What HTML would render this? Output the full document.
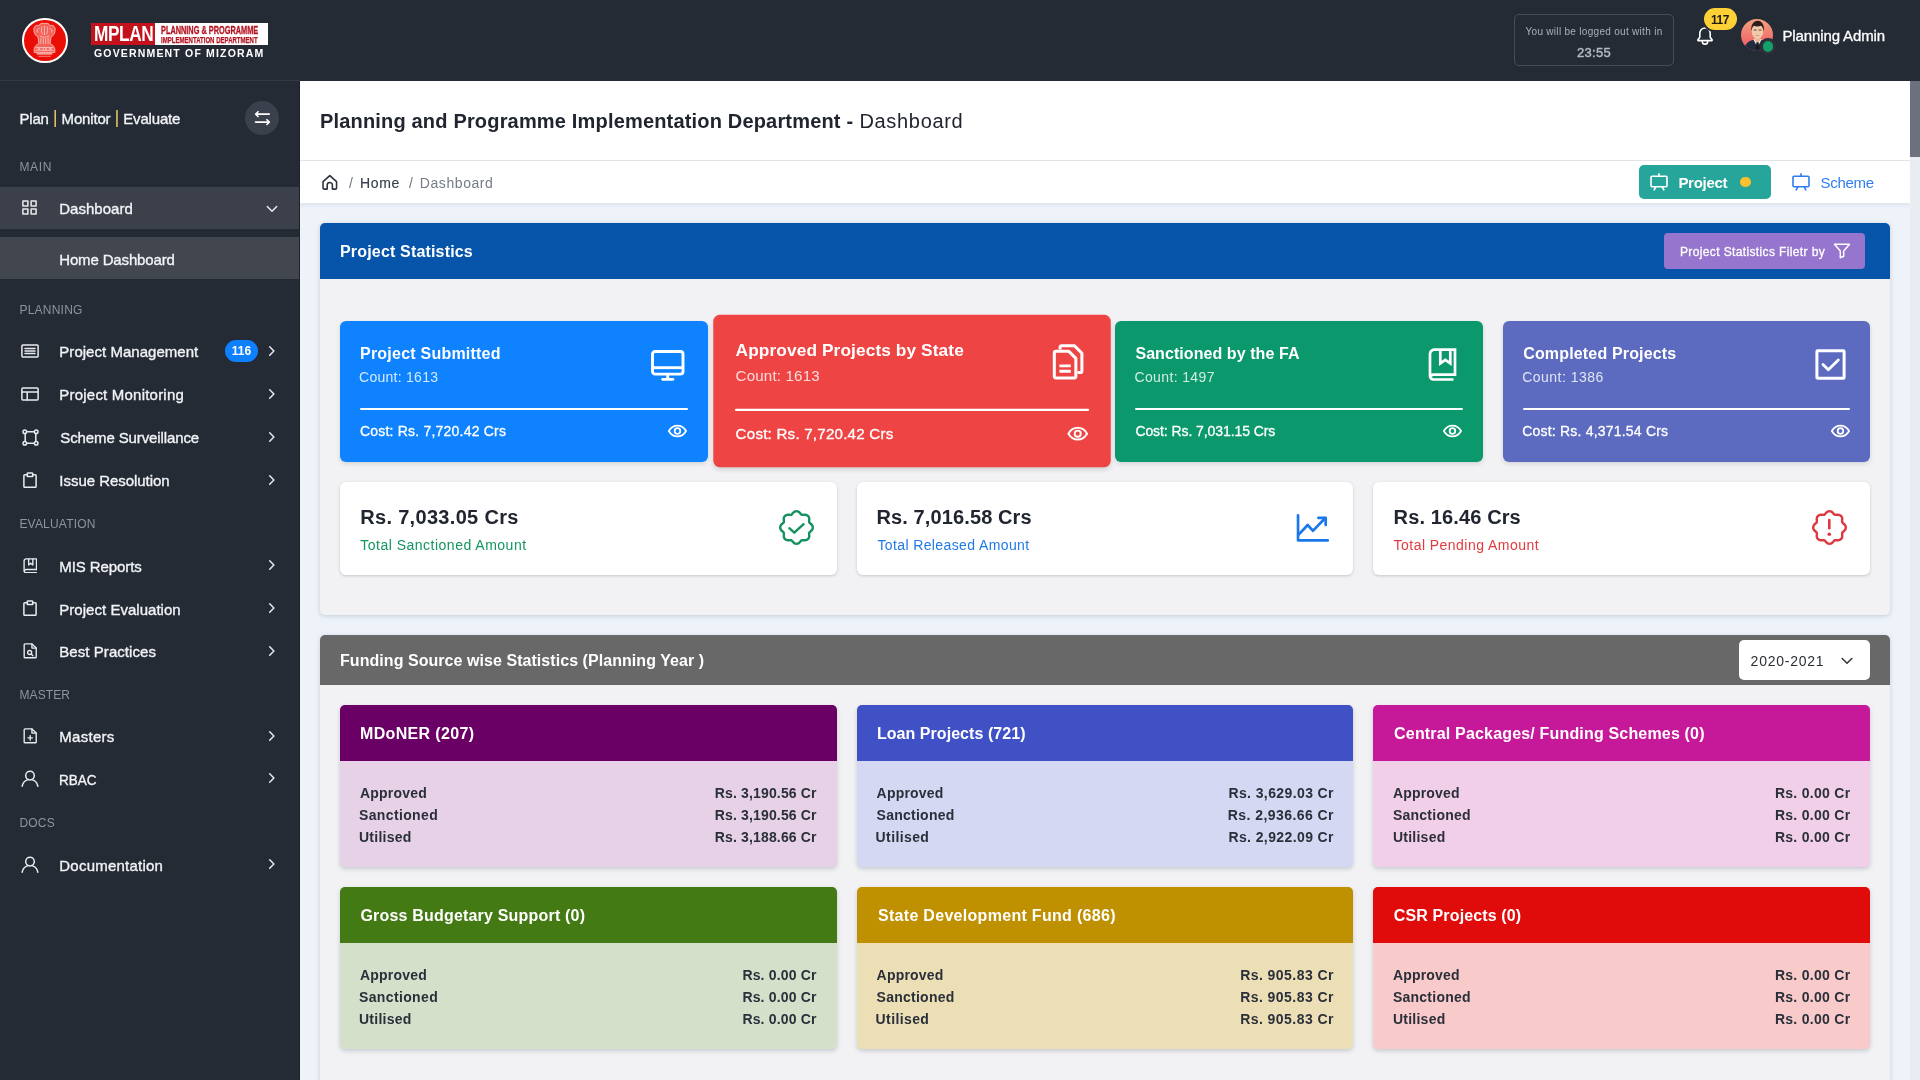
<!DOCTYPE html>
<html lang="en">
<head>
<meta charset="utf-8">
<title>MPLAN - Dashboard</title>
<style>
*{box-sizing:border-box;margin:0;padding:0}
html,body{width:1920px;height:1080px;overflow:hidden}
body{font-family:"Liberation Sans",sans-serif;background:#eef3fa;color:#1f2733;position:relative}
.abs{position:absolute}
.t{position:absolute;white-space:nowrap;line-height:1}
svg{display:block}
/* top header */
#top{position:absolute;left:0;top:0;width:1920px;height:81px;background:#252b35;z-index:5}
/* sidebar */
#side{position:absolute;left:0;top:80px;width:300px;height:1000px;background:#252b35}
#sline{position:absolute;left:0;top:80px;width:300px;height:1px;background:#343944}
#side .sec{position:absolute;left:20px;font-size:12px;color:#8d93a0;letter-spacing:.2px;line-height:1}
#side .it{position:absolute;left:60px;font-size:15px;color:#f1f3f6;line-height:1;white-space:nowrap;font-weight:bold}
#side .ic{position:absolute;left:21px}
#side .ch{position:absolute;left:266px}
/* main */
#main{position:absolute;left:300px;top:80px;width:1610px;height:1000px;background:#eef3fa;overflow:hidden}
#sb{position:absolute;left:1910px;top:80px;width:10px;height:1000px;background:#e9ecf1}
#sb i{position:absolute;left:0;top:1px;width:10px;height:76px;background:#6c717d}

/* top bar pieces */
#emb{position:absolute;left:22.300px;top:17.600px;width:45.400px;height:45.400px;border-radius:50%;background:#ea0d05;border:2.200px solid #fff}
#lg-r{position:absolute;left:91px;top:23px;width:64px;height:21.5px;background:#c4121c}
#lg-w{position:absolute;left:155px;top:23px;width:113px;height:21.5px;background:#fff}
#lg-m{left:94px;top:23px;font-size:22px;font-weight:bold;color:#fff;transform-origin:0 0;transform:scaleX(.785);letter-spacing:-.5px}
#lg-1{left:161px;top:24.5px;font-size:10.5px;font-weight:bold;color:#b3121f;transform-origin:0 0;transform:scaleX(.7);-webkit-text-stroke:.3px #b3121f}
#lg-2{left:161px;top:34.5px;font-size:9.5px;font-weight:bold;color:#b3121f;transform-origin:0 0;transform:scaleX(.636);-webkit-text-stroke:.25px #b3121f}
#lg-g{left:94px;top:47.6px;font-size:10.5px;font-weight:bold;color:#fff;letter-spacing:1.17px}
#lo{position:absolute;left:1514px;top:14px;width:160px;height:52px;border:1px solid #474c58;border-radius:5px}
#lo1{left:0;width:158px;text-align:center;top:12px;font-size:10px;color:#aab0bb;letter-spacing:.3px}
#lo2{left:0;width:158px;text-align:center;top:31px;font-size:13px;color:#b4b9c3;-webkit-text-stroke:.45px #b4b9c3;letter-spacing:.3px}
#bell{position:absolute;left:1696px;top:26.2px}
#bdg{position:absolute;left:1702px;top:6px;width:37px;height:26px;border-radius:13px;background:#fdd135;border:2px solid #252b35;color:#1d1c14;font-size:12px;letter-spacing:-.45px;font-weight:bold;text-align:center;line-height:24px;padding-right:1px}
#av{position:absolute;left:1741px;top:19px;width:32px;height:32px;border-radius:50%;overflow:hidden}
#avd{position:absolute;left:1759.5px;top:38.2px;width:16.5px;height:16.5px;border-radius:50%;background:#13a06a;border:3px solid #2d3038}
#un{left:1782.5px;top:27.6px;font-size:15px;color:#fff;letter-spacing:-.13px;-webkit-text-stroke:.3px #fff}
#side .it{font-weight:normal;-webkit-text-stroke:.35px #f1f3f6}
#tag b{color:#e3c463;font-weight:normal;-webkit-text-stroke:0;font-size:19px;position:relative;top:-1px;line-height:0}
#tog{position:absolute;left:245px;top:21px;width:34px;height:34px;border-radius:50%;background:#3a404c;padding:8px}
#act{position:absolute;left:0;top:107px;width:300px;height:42px;background:#3b404b}
#sub{position:absolute;left:0;top:157px;width:299px;height:42px;background:#41464f}
#b116{position:absolute;left:225px;top:260px;width:33px;height:22px;border-radius:11px;background:#0d80ff;color:#fff;font-size:12px;font-weight:bold;text-align:center;line-height:22px}
/* main pieces */
#tbar{position:absolute;left:0;top:0;width:1610px;height:81px;background:#fff;border-bottom:1px solid #e3e6eb}
#bbar{position:absolute;left:0;top:81px;width:1610px;height:42px;background:#fff;box-shadow:0 2px 4px rgba(140,150,170,.18)}
.ttb{color:#20252f;font-weight:bold}.ttn{color:#20252f}
.bcs{color:#727885}.bch{color:#353c4a;-webkit-text-stroke:.15px #353c4a}.bcd{color:#757b87}
.t{font-size:14px}
.wb{color:#fff;font-weight:bold}
.wm{color:#fff;-webkit-text-stroke:.3px #fff}
#pbtn{background:#26a69a;border-radius:5px}
#ydot{width:10.8px;height:10.8px;border-radius:50%;background:#fbc02d}
#sch{color:#2f7ef0}
.card{background:#f2f2f4;border-radius:5px;box-shadow:0 1px 4px rgba(120,130,150,.35)}
#c1h{background:#0655ab;border-radius:5px 5px 0 0}
#c2h{background:#686868;border-radius:5px 5px 0 0}
#fbtn{background:#9575cd;border-radius:4px}
.sc{position:absolute;top:241px;width:367.5px;height:141px;border-radius:6px;box-shadow:0 2px 4px rgba(60,70,90,.17)}
#s2{transform:translateY(-.5px) scale(1.08)}
.sc .hr{position:absolute;left:20px;right:20px;top:87px;height:2px;background:#fff;border-radius:1px}
.cnt{color:rgba(255,255,255,.82)}
.eye{left:327px;top:103px}
.wc{position:absolute;top:402px;width:496.7px;height:93px;background:#fff;border-radius:6px;box-shadow:0 1px 3px rgba(90,100,120,.3)}
.big{color:#20252f;font-weight:bold}
.wi{left:437.900px;top:27.200px}.wi2{left:439.6px;top:31px}
#sel{background:#fff;border-radius:5px}
#selt{color:#2b2f36}
.fc{position:absolute;width:496.7px;height:162px;border-radius:5px;box-shadow:0 2px 4px rgba(90,100,120,.28)}
.fh{position:absolute;left:0;top:0;width:100%;height:56px;border-radius:5px 5px 0 0}
.fl{color:#2a2f3a;font-weight:bold;font-size:14px}
#m9{transform:scaleX(.9);transform-origin:0 50%;margin-left:-.6px}
#top,#side,#main{will-change:transform}
#emb svg{width:41px;height:41px}
#sedge{position:absolute;left:299px;top:0;width:1px;height:1000px;background:#1d222b}
</style>
</head>
<body>
<div id="top">
<div id="sline"></div>
<div id="emb"><svg width="42" height="42" viewBox="0 0 42 42"><path d="M10.300 11.500C9.300 7.200 12 4.600 15.200 5.700 16.600 3.200 19 3 21 3.600 23 3 25.400 3.200 26.800 5.700 30 4.600 32.700 7.200 31.700 11.500 31.500 14.300 29.600 16.300 27.600 17.600L26.800 24.200C29.200 25.200 31.200 27.200 31.600 30V33.200H10.400V30C10.800 27.200 12.800 25.200 15.200 24.200L14.400 17.600C12.400 16.300 10.500 14.300 10.300 11.500Z" fill="#f4635a" stroke="#f9b4ad" stroke-width="1"/><g fill="none" stroke="#f9c1bb" stroke-width=".9" stroke-linecap="round"><path d="M15.500 8.500c-1.500.5-2.500 2-2 4M26.500 8.500c1.500.5 2.500 2 2 4M18.300 7c-.8 2-.8 5 .5 7.500M23.700 7c.8 2 .8 5-.5 7.500M21 6.500v8.500M16.500 16.500c3 1.600 6 1.600 9 0"/><path d="M17.300 18.500v5.500M19.800 19v5M22.200 19v5M24.700 18.500v5.500"/><path d="M12.500 28.200h17M12 31h18"/><circle cx="21" cy="29.600" r="1.500"/><circle cx="15.200" cy="29.600" r=".9"/><circle cx="26.800" cy="29.600" r=".9"/></g><rect x="12.800" y="34" width="16.400" height="1.300" rx=".5" fill="#fbd5d1"/><rect x="14.500" y="36.600" width="13" height="1.100" rx=".5" fill="#f6857d"/></svg></div>
<div id="lg-r"></div><div id="lg-w"></div>
<div class="t" id="lg-m">MPLAN</div>
<div class="t" id="lg-1">PLANNING &amp; PROGRAMME</div>
<div class="t" id="lg-2">IMPLEMENTATION DEPARTMENT</div>
<div class="t" id="lg-g">GOVERNMENT OF MIZORAM</div>
<div id="lo"><div class="t" id="lo1">You will be logged out with in</div><div class="t" id="lo2">23:55</div></div>
<svg id="bell" width="18" height="19" viewBox="0 0 18 19" fill="none" stroke="#fff" stroke-width="1.600" stroke-linecap="round" stroke-linejoin="round"><path d="M3.800 11.200V7.200a5.200 5.200 0 0 1 10.400 0v4l1.900 2.600v.8H1.900v-.8z"/><path d="M6.300 15.400a2.700 2.700 0 0 0 5.400 0"/></svg>
<div id="bdg">117</div>
<div id="av"><svg width="32" height="32" viewBox="0 0 32 32"><defs><linearGradient id="avg" x1="0" y1="0" x2="0" y2="1"><stop offset="0" stop-color="#f2a27e"/><stop offset=".6" stop-color="#f0736c"/><stop offset="1" stop-color="#e9566f"/></linearGradient></defs><rect width="32" height="32" fill="url(#avg)"/><path d="M3 32c.5-7 4-9.500 9-11h9c5 1.500 8.500 4 9 11z" fill="#232b3e"/><path d="M12.300 20.500l4.200 7.500 4.200-7.500-4.200-2z" fill="#f4f1ea"/><path d="M15.600 22.600h1.800l1 7.400h-3.800z" fill="#15181f"/><path d="M13.500 16h6v5.500l-3 2-3-2z" fill="#e8b896"/><ellipse cx="16.500" cy="12.200" rx="5.900" ry="7.600" fill="#f3caa9"/><path d="M10.300 12.800c-.8-6.800 2.200-11 6.400-11s7 4 6 11c-.6-3.300-1.200-5-2.600-6.100-2.300.900-5.100.900-7.300.100-1.400 1.200-2 2.700-2.500 6z" fill="#2b1f1b"/><rect x="12.600" y="10.400" width="3" height="1" rx=".5" fill="#5b4036"/><rect x="17.500" y="10.400" width="3" height="1" rx=".5" fill="#5b4036"/><rect x="14.500" y="16.200" width="4" height=".9" rx=".4" fill="#c98f7a"/></svg></div>
<div id="avd"></div>
<div class="t" id="un">Planning Admin</div>
</div>
<div id="side">
<div class="t it" id="tag" style="letter-spacing:-0.166px;margin-left:-0.6px;left:20px;top:31.0px">Plan <b>|</b> Monitor <b>|</b> Evaluate</div>
<div id="tog"><svg width="18" height="18" viewBox="0 0 18 18" fill="none" stroke="#fff" stroke-width="1.600" stroke-linecap="round" stroke-linejoin="round"><path d="M16.300 5.100H2.700M5.100 2.700L2.700 5.100l2.400 2.400"/><path d="M2.500 13.100H16.300M13.900 10.700l2.400 2.400-2.400 2.400"/></svg></div>
<div id="act"></div><div id="sub"></div>
<div class="t sec" id="h1" style="letter-spacing:0.666px;margin-left:-0.6px;left:20px;top:81.0px">MAIN</div>
<div class="t sec" id="h2" style="letter-spacing:0.23px;margin-left:-0.6px;left:20px;top:223.7px">PLANNING</div>
<div class="t sec" id="h3" style="letter-spacing:0.198px;margin-left:-0.6px;left:20px;top:437.7px">EVALUATION</div>
<div class="t sec" id="h4" style="letter-spacing:0.12px;margin-left:-0.6px;left:20px;top:608.8px">MASTER</div>
<div class="t sec" id="h5" style="letter-spacing:0.201px;margin-left:-0.6px;left:20px;top:737.0px">DOCS</div>
<div class="ic" style="left:22px;top:119.8px"><svg width="15" height="15" viewBox="0 0 15 15" fill="none" stroke="#e9ebef" stroke-width="1.5" stroke-linejoin="round" stroke-linecap="round" stroke-linejoin="miter"><rect x=".9" y=".9" width="5" height="5"/><rect x="9.1" y=".9" width="5" height="5"/><rect x=".9" y="9.1" width="5" height="5"/><rect x="9.1" y="9.1" width="5" height="5"/></svg></div>
<div class="t it" id="m0" style="letter-spacing:0.025px;margin-left:-0.8px;left:60px;top:120.5px">Dashboard</div>
<div class="ch" style="left:266px;top:124.5px"><svg width="12" height="8" viewBox="0 0 12 8" fill="none" stroke="#e9ebef" stroke-width="1.500" stroke-linecap="round" stroke-linejoin="round"><path d="M1.300 1.500L6 6.200 10.700 1.500"/></svg></div>
<div class="ic" style="left:21px;top:264.0px"><svg width="18" height="14" viewBox="0 0 18 14" fill="none" stroke="#e9ebef" stroke-width="1.5" stroke-linejoin="round" stroke-linecap="round"><rect x=".9" y=".9" width="16.2" height="12.2" rx="1"/><path d="M4 4.4h10M4 7h10M4 9.6h10"/></svg></div>
<div class="t it" id="m1" style="letter-spacing:0.032px;margin-left:-0.7px;left:60px;top:264.2px">Project Management</div>
<div class="ch" style="left:268px;top:264.7px"><svg width="8" height="12" viewBox="0 0 8 12" fill="none" stroke="#e9ebef" stroke-width="1.500" stroke-linecap="round" stroke-linejoin="round"><path d="M1.700 1.800L5.900 6 1.700 10.200"/></svg></div>
<div class="ic" style="left:21px;top:307.0px"><svg width="18" height="14" viewBox="0 0 18 14" fill="none" stroke="#e9ebef" stroke-width="1.5" stroke-linejoin="round" stroke-linecap="round"><rect x=".9" y=".9" width="16.2" height="12.2" rx="1"/><path d="M.9 5h16.2M6.2 5v8"/></svg></div>
<div class="t it" id="m2" style="letter-spacing:0.212px;margin-left:-0.7px;left:60px;top:307.2px">Project Monitoring</div>
<div class="ch" style="left:268px;top:307.7px"><svg width="8" height="12" viewBox="0 0 8 12" fill="none" stroke="#e9ebef" stroke-width="1.500" stroke-linecap="round" stroke-linejoin="round"><path d="M1.700 1.800L5.900 6 1.700 10.200"/></svg></div>
<div class="ic" style="left:21.5px;top:348.5px"><svg width="17" height="17" viewBox="0 0 17 17" fill="none" stroke="#e9ebef" stroke-width="1.5" stroke-linejoin="round" stroke-linecap="round"><circle cx="2.800" cy="2.800" r="1.800"/><circle cx="14.200" cy="2.800" r="1.800"/><circle cx="2.800" cy="14.200" r="1.800"/><circle cx="14.200" cy="14.200" r="1.800"/><path d="M4.700 2.800h7.600M4.700 14.200h7.600M3.200 4.700v7.600M13.800 4.700v7.600"/></svg></div>
<div class="t it" id="m3" style="letter-spacing:-0.111px;margin-left:0.3px;left:60px;top:350.2px">Scheme Surveillance</div>
<div class="ch" style="left:268px;top:350.7px"><svg width="8" height="12" viewBox="0 0 8 12" fill="none" stroke="#e9ebef" stroke-width="1.500" stroke-linecap="round" stroke-linejoin="round"><path d="M1.700 1.800L5.900 6 1.700 10.200"/></svg></div>
<div class="ic" style="left:23px;top:391.8px"><svg width="14" height="16" viewBox="0 0 14 16" fill="none" stroke="#e9ebef" stroke-width="1.5" stroke-linejoin="round" stroke-linecap="round"><path d="M4 2.800H1.700a.8.800 0 0 0-.8.800V14.500a.8.800 0 0 0 .8.800H12.300a.8.800 0 0 0 .8-.800V3.600a.8.800 0 0 0-.8-.800H10"/><path d="M4.300 4.600V1.600a.7.700 0 0 1 .7-.700h4a.7.700 0 0 1 .7.700V4.600z"/></svg></div>
<div class="t it" id="m4" style="letter-spacing:-0.034px;margin-left:-0.7px;left:60px;top:393.0px">Issue Resolution</div>
<div class="ch" style="left:268px;top:393.5px"><svg width="8" height="12" viewBox="0 0 8 12" fill="none" stroke="#e9ebef" stroke-width="1.500" stroke-linecap="round" stroke-linejoin="round"><path d="M1.700 1.800L5.900 6 1.700 10.200"/></svg></div>
<div class="ic" style="left:22.8px;top:477.6px"><svg width="14.6" height="15.5" viewBox="0 0 16 17" fill="none" stroke="#e9ebef" stroke-width="1.5" stroke-linejoin="round" stroke-linecap="round"><path d="M14.800 12.600V1H3.400A2.200 2.200 0 0 0 1.200 3.200V14a2.200 2.200 0 0 0 2.200 2.200H14.800"/><path d="M14.800 12.600H3.400A1.800 1.800 0 0 0 1.600 14.400"/><path d="M6.200 1.200v6.400l2.300-1.900 2.300 1.900V1.200"/></svg></div>
<div class="t it" id="m5" style="letter-spacing:-0.08px;margin-left:-0.7px;left:60px;top:478.5px">MIS Reports</div>
<div class="ch" style="left:268px;top:479.0px"><svg width="8" height="12" viewBox="0 0 8 12" fill="none" stroke="#e9ebef" stroke-width="1.500" stroke-linecap="round" stroke-linejoin="round"><path d="M1.700 1.800L5.900 6 1.700 10.200"/></svg></div>
<div class="ic" style="left:23px;top:520.3px"><svg width="14" height="16" viewBox="0 0 14 16" fill="none" stroke="#e9ebef" stroke-width="1.5" stroke-linejoin="round" stroke-linecap="round"><path d="M4 2.800H1.700a.8.800 0 0 0-.8.800V14.500a.8.800 0 0 0 .8.800H12.300a.8.800 0 0 0 .8-.800V3.600a.8.800 0 0 0-.8-.800H10"/><path d="M4.300 4.600V1.600a.7.700 0 0 1 .7-.700h4a.7.700 0 0 1 .7.700V4.600z"/></svg></div>
<div class="t it" id="m6" style="letter-spacing:0.028px;margin-left:-0.7px;left:60px;top:521.5px">Project Evaluation</div>
<div class="ch" style="left:268px;top:522.0px"><svg width="8" height="12" viewBox="0 0 8 12" fill="none" stroke="#e9ebef" stroke-width="1.500" stroke-linecap="round" stroke-linejoin="round"><path d="M1.700 1.800L5.900 6 1.700 10.200"/></svg></div>
<div class="ic" style="left:22.8px;top:563.2px"><svg width="14.6" height="15.5" viewBox="0 0 16 17" fill="none" stroke="#e9ebef" stroke-width="1.5" stroke-linejoin="round" stroke-linecap="round"><path d="M9.800 1H2.200a.9.9 0 0 0-.9.900V15.300a.9.900 0 0 0 .9.900H13.600a.9.900 0 0 0 .9-.900V5.600z"/><path d="M9.800 1v4.600h4.700"/><circle cx="7.300" cy="10.400" r="2.200"/><path d="M9 12.100l1.800 1.800"/></svg></div>
<div class="t it" id="m7" style="letter-spacing:0.056px;margin-left:-0.7px;left:60px;top:564.2px">Best Practices</div>
<div class="ch" style="left:268px;top:564.7px"><svg width="8" height="12" viewBox="0 0 8 12" fill="none" stroke="#e9ebef" stroke-width="1.500" stroke-linecap="round" stroke-linejoin="round"><path d="M1.700 1.800L5.900 6 1.700 10.200"/></svg></div>
<div class="ic" style="left:22.8px;top:648.1px"><svg width="14.6" height="15.5" viewBox="0 0 16 17" fill="none" stroke="#e9ebef" stroke-width="1.5" stroke-linejoin="round" stroke-linecap="round"><path d="M9.800 1H2.200a.9.900 0 0 0-.9.900V15.300a.9.900 0 0 0 .9.900H13.600a.9.900 0 0 0 .9-.900V5.600z"/><path d="M9.800 1v4.600h4.700"/><path d="M5.400 10.800h5M7.900 8.300v5"/></svg></div>
<div class="t it" id="m8" style="letter-spacing:0.286px;margin-left:-0.7px;left:60px;top:649.1px">Masters</div>
<div class="ch" style="left:268px;top:649.6px"><svg width="8" height="12" viewBox="0 0 8 12" fill="none" stroke="#e9ebef" stroke-width="1.500" stroke-linecap="round" stroke-linejoin="round"><path d="M1.700 1.800L5.900 6 1.700 10.200"/></svg></div>
<div class="ic" style="left:21px;top:689.8px"><svg width="18" height="17" viewBox="0 0 18 17" fill="none" stroke="#e9ebef" stroke-width="1.5" stroke-linejoin="round" stroke-linecap="round"><circle cx="9" cy="5.600" r="4.300"/><path d="M1.200 16.200c.6-3.600 3.200-5.600 5.300-6.300M16.800 16.200c-.6-3.600-3.200-5.600-5.300-6.300"/></svg></div>
<div class="t it" id="m9" style="left:60px;top:691.5px">RBAC</div>
<div class="ch" style="left:268px;top:692.0px"><svg width="8" height="12" viewBox="0 0 8 12" fill="none" stroke="#e9ebef" stroke-width="1.500" stroke-linecap="round" stroke-linejoin="round"><path d="M1.700 1.800L5.900 6 1.700 10.200"/></svg></div>
<div class="ic" style="left:21px;top:775.8px"><svg width="18" height="17" viewBox="0 0 18 17" fill="none" stroke="#e9ebef" stroke-width="1.5" stroke-linejoin="round" stroke-linecap="round"><circle cx="9" cy="5.600" r="4.300"/><path d="M1.200 16.200c.6-3.600 3.200-5.600 5.300-6.300M16.800 16.200c-.6-3.600-3.200-5.600-5.300-6.300"/></svg></div>
<div class="t it" id="m10" style="letter-spacing:0.222px;margin-left:-0.7px;left:60px;top:777.5px">Documentation</div>
<div class="ch" style="left:268px;top:778.0px"><svg width="8" height="12" viewBox="0 0 8 12" fill="none" stroke="#e9ebef" stroke-width="1.500" stroke-linecap="round" stroke-linejoin="round"><path d="M1.700 1.800L5.900 6 1.700 10.200"/></svg></div>
<div class="t it" id="m0s" style="letter-spacing:-0.146px;margin-left:-0.8px;left:60px;top:171.5px">Home Dashboard</div>
<div id="b116">116</div>
<div id="sedge"></div>
</div>
<div id="main">
<div id="tbar"></div><div id="bbar"></div>
<div class="t ttb" id="ttla" style="letter-spacing:0.174px;margin-left:0px;left:20.0px;top:30.8px;font-size:20px">Planning and Programme Implementation Department -</div>
<div class="t ttn" id="ttlb" style="letter-spacing:0.686px;margin-left:-0.2px;left:559.6px;top:30.8px;font-size:20px">Dashboard</div>
<svg class="abs" id="home" style="left:21.300px;top:93.600px" width="17.600" height="16.700" viewBox="0 0 19 18" fill="none" stroke="#2b3240" stroke-width="1.700" stroke-linejoin="round" stroke-linecap="round"><path d="M2.200 8.300L9.500 1.700l7.300 6.600V15a1.300 1.300 0 0 1-1.300 1.300H12.300V12a2.800 2.800 0 0 0-5.600 0v4.300H3.500A1.300 1.300 0 0 1 2.200 15z"/></svg>
<div class="t bcs" id="bc1" style="left:49.0px;top:96.0px;font-size:14px">/</div>
<div class="t bch" id="bc2" style="letter-spacing:0.666px;margin-left:-1px;left:61.0px;top:96.0px;font-size:14px">Home</div>
<div class="t bcs" id="bc3" style="left:109.0px;top:96.0px;font-size:14px">/</div>
<div class="t bcd" id="bc4" style="letter-spacing:0.575px;margin-left:-1.6px;left:121.4px;top:96.0px;font-size:14px">Dashboard</div>
<div class="" id="pbtn" style="position:absolute;left:1339.0px;top:85.0px;width:132.0px;height:34.0px"></div>
<div class="abs" style="left:1350px;top:93px"><svg width="18" height="18" viewBox="0 0 18 18" fill="none" stroke="#fff" stroke-width="1.600" stroke-linejoin="round" stroke-linecap="round"><rect x="1" y="3.200" width="16" height="10.600" rx="1"/><path d="M9 .9v2.300M4.200 16.800l1.500-3M13.800 16.800l-1.500-3"/></svg></div>
<div class="t wb" id="pbt" style="letter-spacing:-0.285px;margin-left:-1.3px;left:1379.7px;top:94.7px;font-size:15px">Project</div>
<div class="abs" id="ydot" style="left:1440.4px;top:96.6px"></div>
<div class="abs" style="left:1492px;top:93px"><svg width="18" height="18" viewBox="0 0 18 18" fill="none" stroke="#2f7ef0" stroke-width="1.600" stroke-linejoin="round" stroke-linecap="round"><rect x="1" y="3.200" width="16" height="10.600" rx="1"/><path d="M9 .9v2.300M4.200 16.800l1.500-3M13.800 16.800l-1.500-3"/></svg></div>
<div class="t " id="sch" style="letter-spacing:-0.3px;margin-left:-0.7px;left:1521.3px;top:94.7px;font-size:15px">Scheme</div>
<div class="card" id="c1" style="position:absolute;left:20.0px;top:143.0px;width:1570.0px;height:392.0px"></div>
<div class="" id="c1h" style="position:absolute;left:20.0px;top:143.0px;width:1570.0px;height:55.5px"></div>
<div class="t wb" id="c1t" style="letter-spacing:0.173px;margin-left:0px;left:40.0px;top:164.0px;font-size:16px">Project Statistics</div>
<div class="" id="fbtn" style="position:absolute;left:1364.0px;top:153.0px;width:201.0px;height:36.0px"></div>
<div class="t wm" id="fbt" style="letter-spacing:0.37px;margin-left:-0.5px;left:1380.5px;top:165.5px;font-size:12px">Project Statistics Filetr by</div>
<svg class="abs" style="left:1533px;top:163px" width="18" height="16" viewBox="0 0 18 16" fill="none" stroke="#fff" stroke-width="1.500" stroke-linejoin="round" stroke-linecap="round"><path d="M1.500 1.200h15l-5.800 6.800v5.200l-3.400 1.600V8z"/></svg>
<div class="sc" id="s1" style="left:40.0px;background:#0f83ff">
<div class="t wb" id="s1a" style="letter-spacing:0.226px;margin-left:0px;left:20px;top:24.7px;font-size:16px">Project Submitted</div>
<div class="t cnt" id="s1b" style="letter-spacing:0.27px;margin-left:-1px;left:20px;top:49.0px;font-size:14px">Count: 1613</div>
<div class="hr"></div>
<div class="t wm" id="s1c" style="letter-spacing:0.206px;margin-left:0px;left:20px;top:103.2px;font-size:14px">Cost: Rs. 7,720.42 Crs</div>
<svg class="abs" style="left:310.800px;top:28.700px" width="34" height="32" viewBox="0 0 34 32" fill="none" stroke="#fff" stroke-width="2.900" stroke-linejoin="round" stroke-linecap="round"><rect x="1.500" y="1.500" width="30.500" height="22.600" rx="2.600"/><path d="M1.500 17.700h30.500" stroke-linecap="butt"/><path d="M16.750 24.100v4" stroke-linecap="butt"/><path d="M11.600 29.300h10.300" stroke-width="2.700"/></svg><svg class="abs eye" width="21" height="14" viewBox="0 0 21 14" fill="none" stroke="#fff" stroke-width="1.800" stroke-linejoin="round"><path d="M1.800 7C4 3.300 6.900 1.600 10.450 1.600S16.900 3.300 19.100 7c-2.200 3.700-5.100 5.400-8.650 5.400S4 10.700 1.800 7z"/><circle cx="10.450" cy="7" r="2.800"/></svg></div>
<div class="sc" id="s2" style="left:427.5px;background:#ef4444">
<div class="t wb" id="s2a" style="letter-spacing:0.093px;margin-left:0.66px;left:20px;top:24.7px;font-size:16px">Approved Projects by State</div>
<div class="t cnt" id="s2b" style="letter-spacing:0.152px;margin-left:0.66px;left:20px;top:49.0px;font-size:14px">Count: 1613</div>
<div class="hr"></div>
<div class="t wm" id="s2c" style="letter-spacing:0.208px;margin-left:0.66px;left:20px;top:103.2px;font-size:14px">Cost: Rs. 7,720.42 Crs</div>
<svg class="abs" style="left:313px;top:26px" width="31" height="36" viewBox="0 0 31 36" fill="none" stroke="#fff" stroke-width="2.800" stroke-linejoin="round" stroke-linecap="butt"><path d="M2.750 30.900V9.100a1.500 1.500 0 0 1 1.500-1.500H16l6.700 6.700v16.600a1.500 1.500 0 0 1-1.500 1.500H4.250a1.500 1.500 0 0 1-1.500-1.500z"/><path d="M8.100 6.100V4.200a1.500 1.500 0 0 1 1.500-1.500h11.900l6.800 6.800v16.400a1.500 1.500 0 0 1-1.500 1.500H24.200"/><path d="M7.500 21.300h10.500M7.500 26.200h10.500" stroke-width="2.600"/></svg><svg class="abs eye" width="21" height="14" viewBox="0 0 21 14" fill="none" stroke="#fff" stroke-width="1.800" stroke-linejoin="round"><path d="M1.800 7C4 3.300 6.900 1.600 10.450 1.600S16.900 3.300 19.100 7c-2.200 3.700-5.100 5.400-8.650 5.400S4 10.700 1.800 7z"/><circle cx="10.450" cy="7" r="2.800"/></svg></div>
<div class="sc" id="s3" style="left:815.0px;background:#0a986c">
<div class="t wb" id="s3a" style="letter-spacing:0.073px;margin-left:0.4px;left:20px;top:24.7px;font-size:16px">Sanctioned by the FA</div>
<div class="t cnt" id="s3b" style="letter-spacing:0.38px;margin-left:-0.6px;left:20px;top:49.0px;font-size:14px">Count: 1497</div>
<div class="hr"></div>
<div class="t wm" id="s3c" style="letter-spacing:-0.082px;margin-left:0.4px;left:20px;top:103.2px;font-size:14px">Cost: Rs. 7,031.15 Crs</div>
<svg class="abs" style="left:313px;top:26.500px" width="30" height="34" viewBox="0 0 30 34" fill="none" stroke="#fff" stroke-width="2.700" stroke-linejoin="miter" stroke-linecap="butt"><path d="M25.500 31.500H5.500a3.500 3.500 0 0 1-3.500-3.500V5.900a4.200 4.200 0 0 1 4.200-4.200H27V26.650H6a3.600 3.600 0 0 0-3.800 2.500"/><path d="M12.300 1.700V15.400l5-3.400 5 3.400V1.700"/></svg><svg class="abs eye" width="21" height="14" viewBox="0 0 21 14" fill="none" stroke="#fff" stroke-width="1.800" stroke-linejoin="round"><path d="M1.800 7C4 3.300 6.900 1.600 10.450 1.600S16.900 3.300 19.100 7c-2.200 3.700-5.100 5.400-8.650 5.400S4 10.700 1.800 7z"/><circle cx="10.450" cy="7" r="2.800"/></svg></div>
<div class="sc" id="s4" style="left:1202.5px;background:#5c6bc0">
<div class="t wb" id="s4a" style="letter-spacing:0.163px;margin-left:0.7px;left:20px;top:24.7px;font-size:16px">Completed Projects</div>
<div class="t cnt" id="s4b" style="letter-spacing:0.48px;margin-left:-0.3px;left:20px;top:49.0px;font-size:14px">Count: 1386</div>
<div class="hr"></div>
<div class="t wm" id="s4c" style="letter-spacing:0.203px;margin-left:-0.3px;left:20px;top:103.2px;font-size:14px">Cost: Rs. 4,371.54 Crs</div>
<svg class="abs" style="left:312px;top:27.500px" width="31" height="31" viewBox="0 0 31 31" fill="none" stroke="#fff" stroke-width="3" stroke-linejoin="round" stroke-linecap="round"><rect x="1.900" y="1.800" width="27.200" height="27.400" rx=".8"/><path d="M8 15.600l5.300 5.200 10-9.800" stroke-width="2.800"/></svg><svg class="abs eye" width="21" height="14" viewBox="0 0 21 14" fill="none" stroke="#fff" stroke-width="1.800" stroke-linejoin="round"><path d="M1.800 7C4 3.300 6.900 1.600 10.450 1.600S16.900 3.300 19.100 7c-2.200 3.700-5.100 5.400-8.650 5.400S4 10.700 1.800 7z"/><circle cx="10.450" cy="7" r="2.800"/></svg></div>
<div class="wc" id="w1" style="left:40.0px">
<div class="t big" id="w1a" style="letter-spacing:0.318px;margin-left:-0.3px;left:20.500px;top:25.0px;font-size:20px">Rs. 7,033.05 Crs</div>
<div class="t" id="w1b" style="letter-spacing:0.499px;margin-left:-0.3px;left:20.500px;top:56.0px;font-size:14px;color:#14965f">Total Sanctioned Amount</div>
<svg class="abs wi" width="37" height="37" viewBox="0 0 37 37" fill="none" stroke="#15925f" stroke-width="2.400" stroke-linejoin="round" stroke-linecap="round"><path d="M18.50 2.21L19.56 2.33L20.58 2.73L21.50 3.44L22.29 4.35L23.01 5.21L23.78 5.76L24.71 5.91L25.83 5.81L27.03 5.73L28.18 5.88L29.18 6.32L30.02 6.98L30.68 7.82L31.12 8.82L31.27 9.97L31.19 11.17L31.09 12.29L31.24 13.22L31.79 13.99L32.65 14.71L33.56 15.50L34.27 16.42L34.67 17.44L34.79 18.50L34.67 19.56L34.27 20.58L33.56 21.50L32.65 22.29L31.79 23.01L31.24 23.78L31.09 24.71L31.19 25.83L31.27 27.03L31.12 28.18L30.68 29.18L30.02 30.02L29.18 30.68L28.18 31.12L27.03 31.27L25.83 31.19L24.71 31.09L23.78 31.24L23.01 31.79L22.29 32.65L21.50 33.56L20.58 34.27L19.56 34.67L18.50 34.79L17.44 34.67L16.42 34.27L15.50 33.56L14.71 32.65L13.99 31.79L13.22 31.24L12.29 31.09L11.17 31.19L9.97 31.27L8.82 31.12L7.82 30.68L6.98 30.02L6.32 29.18L5.88 28.18L5.73 27.03L5.81 25.83L5.91 24.71L5.76 23.78L5.21 23.01L4.35 22.29L3.44 21.50L2.73 20.58L2.33 19.56L2.21 18.50L2.33 17.44L2.73 16.42L3.44 15.50L4.35 14.71L5.21 13.99L5.76 13.22L5.91 12.29L5.81 11.17L5.73 9.97L5.88 8.82L6.32 7.82L6.98 6.98L7.82 6.32L8.82 5.88L9.97 5.73L11.17 5.81L12.29 5.91L13.22 5.76L13.99 5.21L14.71 4.35L15.50 3.44L16.42 2.73L17.44 2.33z"/><path d="M11.300 19.200l5 4.500 9.300-8.500"/></svg></div>
<div class="wc" id="w2" style="left:556.7px">
<div class="t big" id="w2a" style="letter-spacing:0.121px;margin-left:-0.8px;left:20.500px;top:25.0px;font-size:20px">Rs. 7,016.58 Crs</div>
<div class="t" id="w2b" style="letter-spacing:0.39px;margin-left:0.2px;left:20.500px;top:56.0px;font-size:14px;color:#1f7ae6">Total Released Amount</div>
<svg class="abs wi2" width="34" height="30" viewBox="0 0 34 30" fill="none" stroke="#1a78ec" stroke-width="2.700" stroke-linejoin="round" stroke-linecap="round"><path d="M2.050 2.300v25.150h29.700"/><path d="M2.900 21.400l8.800-9.400 5.300 5.800 12-12.500"/><path d="M22.400 4.900h7.300v7.100"/></svg></div>
<div class="wc" id="w3" style="left:1073.3px">
<div class="t big" id="w3a" style="letter-spacing:0.125px;margin-left:-0.2px;left:20.500px;top:25.0px;font-size:20px">Rs. 16.46 Crs</div>
<div class="t" id="w3b" style="letter-spacing:0.458px;margin-left:-0.2px;left:20.500px;top:56.0px;font-size:14px;color:#e23a3f">Total Pending Amount</div>
<svg class="abs wi" width="37" height="37" viewBox="0 0 37 37" fill="none" stroke="#dc3a41" stroke-width="2.400" stroke-linejoin="round" stroke-linecap="round"><path d="M18.50 2.21L19.56 2.33L20.58 2.73L21.50 3.44L22.29 4.35L23.01 5.21L23.78 5.76L24.71 5.91L25.83 5.81L27.03 5.73L28.18 5.88L29.18 6.32L30.02 6.98L30.68 7.82L31.12 8.82L31.27 9.97L31.19 11.17L31.09 12.29L31.24 13.22L31.79 13.99L32.65 14.71L33.56 15.50L34.27 16.42L34.67 17.44L34.79 18.50L34.67 19.56L34.27 20.58L33.56 21.50L32.65 22.29L31.79 23.01L31.24 23.78L31.09 24.71L31.19 25.83L31.27 27.03L31.12 28.18L30.68 29.18L30.02 30.02L29.18 30.68L28.18 31.12L27.03 31.27L25.83 31.19L24.71 31.09L23.78 31.24L23.01 31.79L22.29 32.65L21.50 33.56L20.58 34.27L19.56 34.67L18.50 34.79L17.44 34.67L16.42 34.27L15.50 33.56L14.71 32.65L13.99 31.79L13.22 31.24L12.29 31.09L11.17 31.19L9.97 31.27L8.82 31.12L7.82 30.68L6.98 30.02L6.32 29.18L5.88 28.18L5.73 27.03L5.81 25.83L5.91 24.71L5.76 23.78L5.21 23.01L4.35 22.29L3.44 21.50L2.73 20.58L2.33 19.56L2.21 18.50L2.33 17.44L2.73 16.42L3.44 15.50L4.35 14.71L5.21 13.99L5.76 13.22L5.91 12.29L5.81 11.17L5.73 9.97L5.88 8.82L6.32 7.82L6.98 6.98L7.82 6.32L8.82 5.88L9.97 5.73L11.17 5.81L12.29 5.91L13.22 5.76L13.99 5.21L14.71 4.35L15.50 3.44L16.42 2.73L17.44 2.33z"/><path d="M18.300 11v8.200" stroke-width="2.600"/><circle cx="18.300" cy="25.200" r="1.800" fill="#dc3a41" stroke="none"/></svg></div>
<div class="card" id="c2" style="position:absolute;left:20.0px;top:555.0px;width:1570.0px;height:465.0px"></div>
<div class="" id="c2h" style="position:absolute;left:20.0px;top:555.0px;width:1570.0px;height:50.0px"></div>
<div class="t wb" id="c2t" style="letter-spacing:0.054px;margin-left:0px;left:40.0px;top:573.0px;font-size:16px">Funding Source wise Statistics (Planning Year )</div>
<div class="" id="sel" style="position:absolute;left:1439.0px;top:560.0px;width:131.0px;height:40.0px"></div>
<div class="t " id="selt" style="letter-spacing:0.75px;margin-left:-0.7px;left:1451.3px;top:573.6px;font-size:14px">2020-2021</div>
<svg class="abs" style="left:1541.0px;top:576.5px" width="12" height="8" viewBox="0 0 12 8" fill="none" stroke="#333" stroke-width="1.500" stroke-linejoin="round" stroke-linecap="round"><path d="M1.200 1.500L6 6.300l4.800-4.800"/></svg>
<div class="fc" id="f1" style="left:40.0px;top:625px;background:#e6d1e6">
<div class="fh" style="background:#6a0066"></div>
<div class="t wb" id="f1t" style="letter-spacing:0.345px;margin-left:0px;left:20px;top:21.0px;font-size:16px">MDoNER (207)</div>
<div class="t fl" id="f1l0" style="letter-spacing:0.196px;margin-left:0px;left:20px;top:81.3px">Approved</div>
<div class="t fl" id="f1v0" style="letter-spacing:0.151px;margin-right:-0.49px;right:20.500px;top:81.3px">Rs. 3,190.56 Cr</div>
<div class="t fl" id="f1l1" style="letter-spacing:0.36px;margin-left:-1px;left:20px;top:103.3px">Sanctioned</div>
<div class="t fl" id="f1v1" style="letter-spacing:0.151px;margin-right:-0.49px;right:20.500px;top:103.3px">Rs. 3,190.56 Cr</div>
<div class="t fl" id="f1l2" style="letter-spacing:0.249px;margin-left:-1px;left:20px;top:125.3px">Utilised</div>
<div class="t fl" id="f1v2" style="letter-spacing:0.151px;margin-right:-0.49px;right:20.500px;top:125.3px">Rs. 3,188.66 Cr</div>
</div>
<div class="fc" id="f2" style="left:556.7px;top:625px;background:#d5d8f3">
<div class="fh" style="background:#3f51c5"></div>
<div class="t wb" id="f2t" style="letter-spacing:0.055px;margin-left:0.2px;left:20px;top:21.0px;font-size:16px">Loan Projects (721)</div>
<div class="t fl" id="f2l0" style="letter-spacing:0.196px;margin-left:-0.1px;left:20px;top:81.3px">Approved</div>
<div class="t fl" id="f2v0" style="letter-spacing:0.393px;margin-right:-1.08px;right:20.500px;top:81.3px">Rs. 3,629.03 Cr</div>
<div class="t fl" id="f2l1" style="letter-spacing:0.249px;margin-left:-0.1px;left:20px;top:103.3px">Sanctioned</div>
<div class="t fl" id="f2v1" style="letter-spacing:0.438px;margin-right:-1.09px;right:20.500px;top:103.3px">Rs. 2,936.66 Cr</div>
<div class="t fl" id="f2l2" style="letter-spacing:0.393px;margin-left:-1.1px;left:20px;top:125.3px">Utilised</div>
<div class="t fl" id="f2v2" style="letter-spacing:0.393px;margin-right:-1.08px;right:20.500px;top:125.3px">Rs. 2,922.09 Cr</div>
</div>
<div class="fc" id="f3" style="left:1073.3px;top:625px;background:#f2cfe8">
<div class="fh" style="background:#c6199a"></div>
<div class="t wb" id="f3t" style="letter-spacing:0.175px;margin-left:0.8px;left:20px;top:21.0px;font-size:16px">Central Packages/ Funding Schemes (0)</div>
<div class="t fl" id="f3l0" style="letter-spacing:0.196px;margin-left:-0.4px;left:20px;top:81.3px">Approved</div>
<div class="t fl" id="f3v0" style="letter-spacing:0.28px;margin-right:-0.88px;right:20.500px;top:81.3px">Rs. 0.00 Cr</div>
<div class="t fl" id="f3l1" style="letter-spacing:0.249px;margin-left:-0.4px;left:20px;top:103.3px">Sanctioned</div>
<div class="t fl" id="f3v1" style="letter-spacing:0.28px;margin-right:-0.88px;right:20.500px;top:103.3px">Rs. 0.00 Cr</div>
<div class="t fl" id="f3l2" style="letter-spacing:0.255px;margin-left:-0.4px;left:20px;top:125.3px">Utilised</div>
<div class="t fl" id="f3v2" style="letter-spacing:0.28px;margin-right:-0.88px;right:20.500px;top:125.3px">Rs. 0.00 Cr</div>
</div>
<div class="fc" id="f4" style="left:40.0px;top:807px;background:#d5e0cb">
<div class="fh" style="background:#447a14"></div>
<div class="t wb" id="f4t" style="letter-spacing:0.193px;margin-left:0.4px;left:20px;top:21.0px;font-size:16px">Gross Budgetary Support (0)</div>
<div class="t fl" id="f4l0" style="letter-spacing:0.196px;margin-left:0px;left:20px;top:81.3px">Approved</div>
<div class="t fl" id="f4v0" style="letter-spacing:0.16px;margin-right:-0.36px;right:20.500px;top:81.3px">Rs. 0.00 Cr</div>
<div class="t fl" id="f4l1" style="letter-spacing:0.36px;margin-left:-1px;left:20px;top:103.3px">Sanctioned</div>
<div class="t fl" id="f4v1" style="letter-spacing:0.16px;margin-right:-0.36px;right:20.500px;top:103.3px">Rs. 0.00 Cr</div>
<div class="t fl" id="f4l2" style="letter-spacing:0.249px;margin-left:-1px;left:20px;top:125.3px">Utilised</div>
<div class="t fl" id="f4v2" style="letter-spacing:0.16px;margin-right:-0.36px;right:20.500px;top:125.3px">Rs. 0.00 Cr</div>
</div>
<div class="fc" id="f5" style="left:556.7px;top:807px;background:#ecdfb6">
<div class="fh" style="background:#bf9000"></div>
<div class="t wb" id="f5t" style="letter-spacing:0.3px;margin-left:1.3px;left:20px;top:21.0px;font-size:16px">State Development Fund (686)</div>
<div class="t fl" id="f5l0" style="letter-spacing:0.196px;margin-left:-0.1px;left:20px;top:81.3px">Approved</div>
<div class="t fl" id="f5v0" style="letter-spacing:0.444px;margin-right:-1.02px;right:20.500px;top:81.3px">Rs. 905.83 Cr</div>
<div class="t fl" id="f5l1" style="letter-spacing:0.249px;margin-left:-0.1px;left:20px;top:103.3px">Sanctioned</div>
<div class="t fl" id="f5v1" style="letter-spacing:0.444px;margin-right:-1.02px;right:20.500px;top:103.3px">Rs. 905.83 Cr</div>
<div class="t fl" id="f5l2" style="letter-spacing:0.393px;margin-left:-1.1px;left:20px;top:125.3px">Utilised</div>
<div class="t fl" id="f5v2" style="letter-spacing:0.444px;margin-right:-1.02px;right:20.500px;top:125.3px">Rs. 905.83 Cr</div>
</div>
<div class="fc" id="f6" style="left:1073.3px;top:807px;background:#f8caca">
<div class="fh" style="background:#e00b0b"></div>
<div class="t wb" id="f6t" style="letter-spacing:0.133px;margin-left:0.5px;left:20px;top:21.0px;font-size:16px">CSR Projects (0)</div>
<div class="t fl" id="f6l0" style="letter-spacing:0.196px;margin-left:-0.4px;left:20px;top:81.3px">Approved</div>
<div class="t fl" id="f6v0" style="letter-spacing:0.28px;margin-right:-0.88px;right:20.500px;top:81.3px">Rs. 0.00 Cr</div>
<div class="t fl" id="f6l1" style="letter-spacing:0.249px;margin-left:-0.4px;left:20px;top:103.3px">Sanctioned</div>
<div class="t fl" id="f6v1" style="letter-spacing:0.28px;margin-right:-0.88px;right:20.500px;top:103.3px">Rs. 0.00 Cr</div>
<div class="t fl" id="f6l2" style="letter-spacing:0.255px;margin-left:-0.4px;left:20px;top:125.3px">Utilised</div>
<div class="t fl" id="f6v2" style="letter-spacing:0.28px;margin-right:-0.88px;right:20.500px;top:125.3px">Rs. 0.00 Cr</div>
</div>
</div>
<div id="sb"><i></i></div>
</body>
</html>
